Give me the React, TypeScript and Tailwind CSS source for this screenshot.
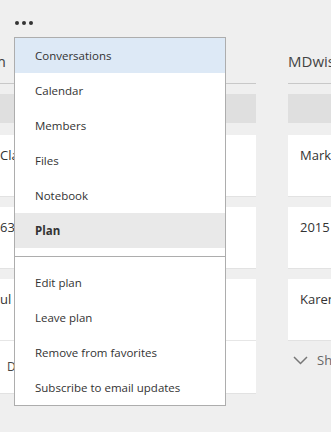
const menuTop = ["Conversations", "Calendar", "Members", "Files", "Notebook", "Plan"];
const menuBottom = ["Edit plan", "Leave plan", "Remove from favorites", "Subscribe to email updates"];

function Card({ text, footer, h = "h-[61px]" }: { text: string; footer?: string; h?: string }) {
  return (
    <div className="bg-white border-b border-[#e2e2e2]">
      <div className={`${h} px-3 pt-[10px] text-[13px] leading-5 text-[#333] whitespace-nowrap`}>{text}</div>
      {footer && (
        <div className="h-[53px] border-t border-[#e6e6e6] pl-[19px] pt-[16px] text-[12px] leading-5 text-[#444]">
          {footer}
        </div>
      )}
    </div>
  );
}

function Column({ title, cards, more }: { title: string; cards: { text: string; footer?: string }[]; more?: boolean }) {
  return (
    <div className="w-[268px] shrink-0">
      <div className="h-[84px] border-b border-[#c8c8c8] pt-[51px] text-[15px] leading-5 text-[#444] whitespace-nowrap">
        {title}
      </div>
      <div className="mt-[10px] h-[29px] bg-[#dfdfdf]" />
      <div className="mt-[12px] flex flex-col gap-[10px]">
        {cards.map((c) => (
          <Card key={c.text} text={c.text} footer={c.footer} />
        ))}
      </div>
      {more && (
        <div className="mt-[10px] flex items-center gap-[9px] pl-[5px] text-[13px] text-[#666]">
          <svg width="15" height="9" viewBox="0 0 15 9" fill="none">
            <polyline points="1,1 7.5,7.5 14,1" stroke="#777" strokeWidth="1.5" />
          </svg>
          <span>Show more</span>
        </div>
      )}
    </div>
  );
}

export default function App() {
  return (
    <div className="relative h-[432px] w-[331px] overflow-hidden bg-[#efefef] font-['Open_Sans',sans-serif]">
      <div className="flex gap-[32px] -ml-[12px]">
        <div className="w-[268px] shrink-0">
          <div className="h-[84px] border-b border-[#c8c8c8] pt-[51px] text-[15px] leading-5 text-[#444] whitespace-nowrap">
            <span className="-ml-[21px]">Team</span>
          </div>
          <div className="mt-[10px] h-[29px] bg-[#dfdfdf]" />
          <div className="mt-[12px] flex flex-col gap-[10px]">
            <Card text="Claire" />
            <Card text="6300" />
            <Card text="ul" footer="Due" />
          </div>
        </div>
        <Column
          title="MDwise Plan"
          cards={[{ text: "Mark" }, { text: "2015" }, { text: "Karen" }]}
          more
        />
      </div>

      <div className="absolute left-[15px] top-[21px] flex gap-[3px]">
        <span className="h-[4px] w-[4px] rounded-full bg-[#333]" />
        <span className="h-[4px] w-[4px] rounded-full bg-[#333]" />
        <span className="h-[4px] w-[4px] rounded-full bg-[#333]" />
      </div>

      <div className="absolute left-[14px] top-[37px] w-[212px] border border-[#adadad] bg-white text-[11.5px] text-[#333]">
        <div className="flex flex-col">
          {menuTop.map((m, i) => (
            <div
              key={m}
              className={`flex h-[35px] items-center pl-[20px] ${i === 0 ? "bg-[#dde9f6]" : ""} ${
                m === "Plan" ? "bg-[#e9e9e9] font-bold" : ""
              }`}
            >
              {m}
            </div>
          ))}
        </div>
        <div className="my-[8px] h-px bg-[#adadad]" />
        <div className="flex flex-col">
          {menuBottom.map((m) => (
            <div key={m} className="flex h-[35px] items-center pl-[20px]">
              {m}
            </div>
          ))}
        </div>
      </div>
    </div>
  );
}
